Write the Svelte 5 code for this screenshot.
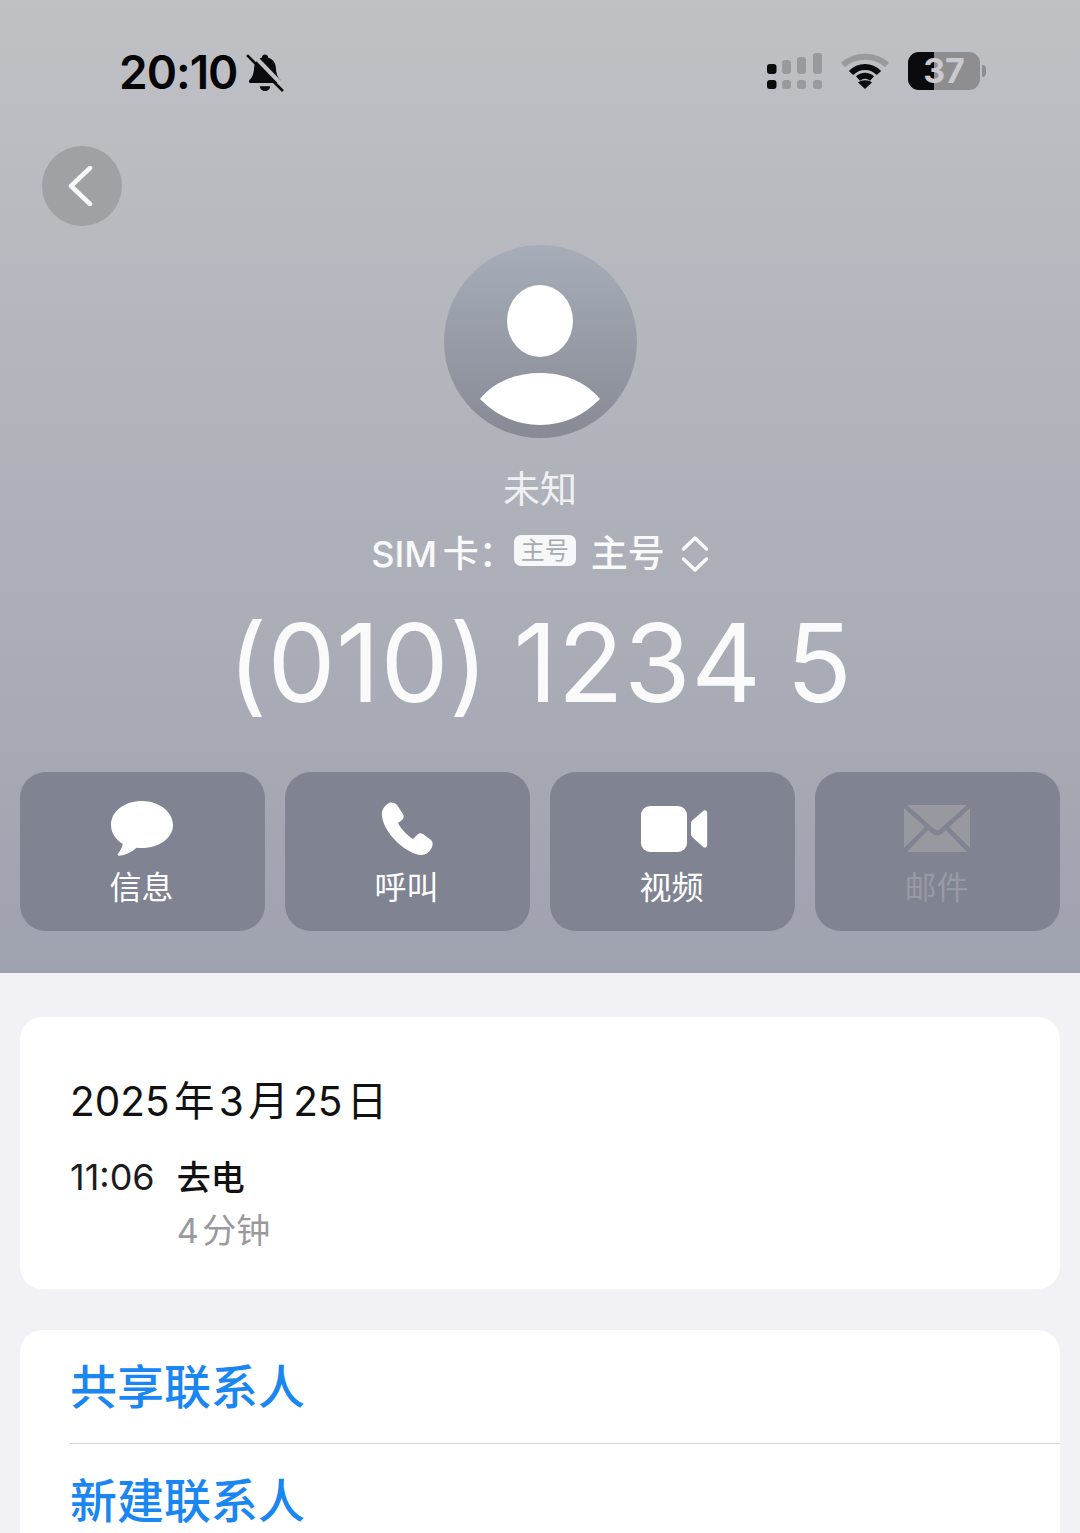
<script lang="ts">
  const actions = [
    { key: "msg", label: "信息" },
    { key: "call", label: "呼叫" },
    { key: "video", label: "视频" },
    { key: "mail", label: "邮件", off: true }
  ];
</script>

<main>
  <header class="hero">
    <div class="status">
      <div class="time">
        <span>20:10</span>
        <svg class="bell" width="38" height="39" viewBox="0 0 36 37">
          <path d="M18 1.500c-1.800 0-3 1.300-3 2.900-4.700 1.300-7 4.800-7.300 9.300-.3 5-1.200 8.600-4.400 12-1 1.100-.6 2.800 1.100 2.800h27.200c1.700 0 2.100-1.700 1.100-2.800-3.200-3.400-4.100-7-4.400-12-.3-4.500-2.600-8-7.300-9.300 0-1.600-1.200-2.900-3-2.900z" />
          <path d="M13 31.500h10c-.3 2.600-2.400 4.500-5 4.500s-4.700-1.900-5-4.500z" />
          <path class="slash-gap" d="M2 2 34 35" />
          <path class="slash" d="M1 2 35 36" />
        </svg>
      </div>
      <div class="indicators">
        <svg width="56" height="36" viewBox="-1 0 56 36">
          <g fill="#0b0b0d">
            <rect x="0" y="11" width="9.500" height="10" rx="3" />
            <rect x="0" y="27" width="9.500" height="9" rx="3" />
          </g>
          <g fill="#9a9a9e">
            <rect x="15" y="7" width="9" height="14" rx="3" />
            <rect x="15" y="27" width="9" height="9" rx="3" />
            <rect x="30" y="4" width="9" height="17" rx="3" />
            <rect x="30" y="27" width="9" height="9" rx="3" />
            <rect x="46" y="0" width="9" height="21" rx="3" />
            <rect x="46" y="27" width="9" height="9" rx="3" />
          </g>
        </svg>
        <svg class="wifi" width="48" height="36" viewBox="0 0 48 36">
          <path class="arc-far" d="M2 12C14 1 34 1 46 12" />
          <path class="arc" d="M10 20C18 12 30 12 38 20" />
          <path class="arc" d="M17 25.500C21 21.800 27 21.800 31 25.500" />
          <path d="M24 36 17 29.500C21 26.500 27 26.500 31 29.500z" fill="#0b0b0d" />
        </svg>
        <div class="battery">
          <div class="cell">
            <span class="fill"></span>
            <span class="level">37</span>
          </div>
          <span class="cap"></span>
        </div>
      </div>
    </div>

    <div class="nav">
      <button class="back" aria-label="返回">
        <svg width="26" height="40" viewBox="0 0 26 40">
          <path d="M23 2 4 20l19 18" />
        </svg>
      </button>
    </div>

    <div class="avatar">
      <span class="head"></span>
      <svg class="shoulders" width="120" height="52" viewBox="0 0 120 52">
        <path d="M0 26C15 8 37 0 60 0s45 8 60 26C103 43 83 52 60 52S17 43 0 26z" />
      </svg>
    </div>

    <div class="name">未知</div>
    <div class="sim">
      <span class="sim-label">SIM 卡<span class="colon">：</span></span>
      <span class="badge">主号</span>
      <span class="line">主号</span>
      <svg width="28" height="38" viewBox="0 0 28 38">
        <path d="M2.500 14 14 3l11.500 11M2.500 24 14 35l11.500-11" />
      </svg>
    </div>
    <div class="number">(010) 1234 5</div>

    <div class="actions">
      {#each actions as a}
        <button class="action" class:off={a.off}>
          <span class="icon">
            {#if a.key === "msg"}
              <svg width="64" height="58" viewBox="0 0 64 58">
                <path d="M32 1C15 1 1 11 1 25c0 8 4.500 14.500 11.800 19-.6 3.500-2.600 7-4.800 9.500-1 1.200-.3 2.500 1.200 2.300 6-.8 12-3.400 17.400-8.100 1.800.2 3.500.3 5.400.3 17 0 31-10 31-23S49 1 32 1z" fill="#fff" />
              </svg>
            {:else if a.key === "call"}
              <svg width="52" height="54" viewBox="0 0 52 54">
                <path d="M8 1C11 0 14 1 16 3L22 12C23 14 23 16 21 18L17 21C19 26 27 34 32 37L36 33C38 31 40 31 42 32L50 38C52 40 52 42 51 45C49 50 45 53 40 53C28 53 3 33 1 14C0 8 4 3 8 1z" fill="#fff" />
              </svg>
            {:else if a.key === "video"}
              <svg class="cam" width="68" height="46" viewBox="0 0 68 46">
                <rect x="0" y="0" width="46" height="46" rx="9" fill="#fff" />
                <path d="M50 17c0-1 .4-1.800 1.200-2.500l11-9.500c1.700-1.400 4-.4 4 1.700v32.500c0 2-2.300 3.200-4 1.700l-11-9.800c-.8-.7-1.200-1.500-1.200-2.500z" fill="#fff" />
              </svg>
            {:else}
              <svg width="66" height="48" viewBox="0 0 66 48">
                <path d="M3 0h60L36 24c-1.800 1.500-4.200 1.500-6 0z" fill="#97999f" />
                <path d="M0 3v40l21-21zM66 3v40L45 22z" fill="#97999f" />
                <path d="M3 47h60L42 25l-4 3.500c-3 2.500-7 2.500-10 0L24 25z" fill="#97999f" />
              </svg>
            {/if}
          </span>
          <span class="label">{a.label}</span>
        </button>
      {/each}
    </div>
  </header>

  <section class="card log">
    <div class="date">2025 年 3 月 25 日</div>
    <div class="entry">
      <span class="clock">11:06</span>
      <div>
        <div class="kind">去电</div>
        <div class="duration">4 分钟</div>
      </div>
    </div>
  </section>

  <section class="card links">
    <div class="link">共享联系人</div>
    <div class="link">新建联系人</div>
  </section>
</main>

<style>
  :global(body) {
    margin: 0;
    background: #f1f1f6;
  }

  main {
    width: 1080px;
    height: 1533px;
    overflow: hidden;
    font-family: "Inter", "Noto Sans CJK SC", sans-serif;
    background: #f1f1f6;
  }

  .hero {
    height: 973px;
    box-sizing: border-box;
    padding: 0 20px;
    background: linear-gradient(#c0c1c5, #9fa2af);
    display: flex;
    flex-direction: column;
    align-items: center;
  }

  .status {
    align-self: stretch;
    height: 146px;
    box-sizing: border-box;
    padding: 47px 74px 0 99px;
    display: flex;
    justify-content: space-between;
    align-items: flex-start;
  }

  .time {
    display: flex;
    align-items: center;
    gap: 9px;
    font-size: 46px;
    font-weight: 600;
    line-height: 50px;
    letter-spacing: -1px;
    color: #060608;
  }

  .bell {
    fill: #0b0b0d;
  }

  .slash {
    fill: none;
    stroke: #0b0b0d;
    stroke-width: 2.500;
  }

  .slash-gap {
    fill: none;
    stroke: #c0c1c5;
    stroke-width: 4;
    transform: translate(3px, -2px);
  }

  .indicators {
    display: flex;
    align-items: center;
    gap: 19px;
    margin-top: 5px;
  }

  .arc-far,
  .arc {
    fill: none;
    stroke-width: 6;
  }

  .arc-far {
    stroke: #9a9a9e;
  }

  .arc {
    stroke: #0b0b0d;
  }

  .battery {
    display: flex;
    align-items: center;
    gap: 2px;
  }

  .cell {
    position: relative;
    width: 72px;
    height: 38px;
    border-radius: 11px;
    background: #8e8e91;
  }

  .fill {
    position: absolute;
    left: 0;
    top: 0;
    bottom: 0;
    width: 26px;
    border-radius: 11px 0 0 11px;
    background: #0b0b0d;
  }

  .level {
    position: absolute;
    inset: 0;
    text-align: center;
    font-size: 34px;
    line-height: 38px;
    font-weight: 700;
    color: #c9cacd;
  }

  .cap {
    width: 4px;
    height: 12px;
    border-radius: 0 4px 4px 0;
    background: #8e8e91;
  }

  .nav {
    align-self: stretch;
    height: 99px;
  }

  .back {
    width: 80px;
    height: 80px;
    margin-left: 22px;
    border: 0;
    padding: 0;
    border-radius: 50%;
    background: #a0a1a5;
    display: flex;
    align-items: center;
    justify-content: center;
  }

  .back svg {
    fill: none;
    stroke: #f8f8f9;
    stroke-width: 4.500;
    stroke-linecap: round;
    stroke-linejoin: round;
    margin-right: 4px;
  }

  .avatar {
    position: relative;
    width: 193px;
    height: 193px;
    flex-shrink: 0;
    border-radius: 50%;
    overflow: hidden;
    background: linear-gradient(#a6adb9, #878a95);
  }

  .head {
    position: absolute;
    left: 63px;
    top: 40px;
    width: 66px;
    height: 72px;
    border-radius: 50%;
    background: #fff;
  }

  .shoulders {
    position: absolute;
    left: 36px;
    top: 128px;
    fill: #fff;
  }

  .name {
    margin-top: 29px;
    font-size: 37px;
    line-height: 46px;
    color: #f0f1f3;
  }

  .sim {
    margin-top: 19px;
    height: 44px;
    display: flex;
    align-items: center;
    font-size: 36px;
    line-height: 44px;
    font-weight: 500;
    color: #f8f9fa;
  }

  .sim-label {
    word-spacing: -4px;
  }

  .badge {
    width: 62px;
    height: 31px;
    margin: -8px 15px 0 -1px;
    border-radius: 7px;
    background: #f6f7f9;
    color: #a7aab3;
    font-size: 24px;
    line-height: 31px;
    font-weight: 400;
    text-align: center;
  }

  .line {
    margin-right: 16px;
    font-size: 37px;
  }

  .sim svg {
    fill: none;
    stroke: #f8f9fa;
    stroke-width: 3.500;
    stroke-linecap: round;
    stroke-linejoin: round;
  }

  .number {
    margin-top: 24px;
    font-size: 108px;
    line-height: 126px;
    font-weight: 400;
    letter-spacing: 0.4px;
    word-spacing: -6px;
    color: #fafafb;
  }

  .actions {
    align-self: stretch;
    margin-top: 46px;
    display: grid;
    grid-template-columns: repeat(4, 1fr);
    gap: 20px;
  }

  .action {
    height: 159px;
    padding: 0 2px 0 0;
    border: 0;
    border-radius: 26px;
    background: #7f8392;
    display: flex;
    flex-direction: column;
    align-items: center;
    font-family: inherit;
  }

  .icon {
    height: 62px;
    margin-top: 26px;
    display: flex;
    align-items: center;
    justify-content: center;
  }

  .cam {
    margin-left: 6px;
  }

  .label {
    margin-top: 7px;
    font-size: 32px;
    line-height: 42px;
    color: #fff;
  }

  .off .label {
    color: #979aa3;
  }

  .card {
    margin: 0 20px;
    background: #fff;
    border-radius: 22px;
  }

  .log {
    margin-top: 44px;
    height: 272px;
    box-sizing: border-box;
    padding: 58px 50px 0;
  }

  .date {
    font-size: 40.500px;
    line-height: 54px;
    word-spacing: -7px;
    color: #111;
  }

  .entry {
    margin-top: 22px;
    display: flex;
    gap: 22px;
    font-size: 36px;
    line-height: 53px;
  }

  .clock {
    color: #1c1c1e;
  }

  .kind {
    font-size: 34px;
    font-weight: 500;
    color: #111;
  }

  .duration {
    font-size: 34px;
    word-spacing: -6px;
    color: #9a9a9e;
  }

  .links {
    margin-top: 41px;
    padding-left: 50px;
  }

  .link {
    height: 113px;
    box-sizing: border-box;
    padding-bottom: 6px;
    display: flex;
    align-items: center;
    font-size: 47px;
    font-weight: 500;
    color: #1a86f2;
  }

  .link + .link {
    border-top: 1px solid #d5d5d8;
  }
</style>
